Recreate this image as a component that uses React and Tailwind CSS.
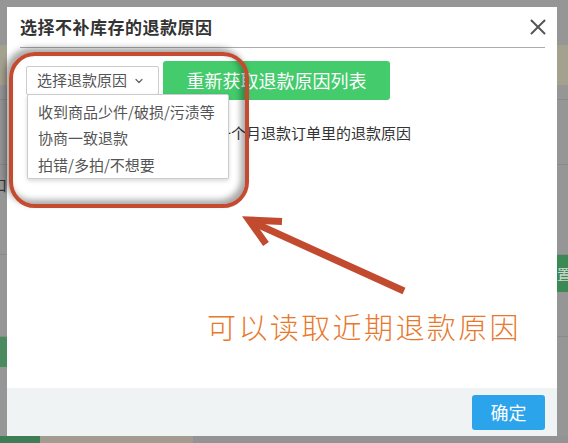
import { ChevronDown, X } from 'lucide-react'

const FONT = { fontFamily: '"Noto Sans CJK SC", "Noto Sans", sans-serif' }

function FondoPagina() {
  // lo que se ve de la página detrás del overlay gris
  return (
    <div className="flex flex-col w-[568px] h-[443px] bg-[#969696]">
      <div className="h-[45px]" />
      <div className="h-[40px] bg-[#a4a18f]" />
      <div className="h-[15px] border-b border-[#8a8a8a]" />
      <div className="h-[65px] border-b border-[#8a8a8a] flex items-end">
        <span className="text-[15px] leading-none text-[#333] -ml-[8px] mb-[-28px]">口</span>
      </div>
      <div className="h-[90px] border-b border-[#8a8a8a]" />
      <div className="h-[37px] flex justify-end">
        <div className="w-[11px] bg-[#3b8a55] text-[15px] text-[#cfd8cf] leading-[37px] overflow-hidden">置</div>
      </div>
      <div className="h-[45px] border-b border-[#8a8a8a]" />
      <div className="h-[30px] flex">
        <div className="w-[7px] bg-[#4a8c60]" />
      </div>
      <div className="h-[69px]" />
      <div className="h-[7px] flex">
        <div className="w-[40px] bg-[#3f7d57]" />
        <div className="w-[153px] bg-[#a29c90]" />
        <div className="flex-1 bg-[#939393]" />
      </div>
    </div>
  )
}

export default function App() {
  const opciones = ['收到商品少件/破损/污渍等', '协商一致退款', '拍错/多拍/不想要']
  return (
    <div className="relative w-[568px] h-[443px] overflow-hidden" style={FONT}>
      <FondoPagina />

      <div className="absolute left-[7px] top-[7px] w-[550px] h-[429px] bg-white flex flex-col">
        <div className="mx-[13px] mr-[12px] h-[41px] border-b border-[#acacac] flex items-center justify-between">
          <h1 className="text-[17px] tracking-[0.5px] font-bold text-[#333] -mt-[1px]">选择不补库存的退款原因</h1>
          <X size={26} strokeWidth={1.8} className="text-[#555] -mt-[1px] -mr-[6px]" />
        </div>

        <div className="relative flex-1 px-[19px] pt-[13px]">
          <div className="flex items-center gap-[4px]">
            <div className="w-[133px] h-[29px] border border-[#ccc] rounded-[2px] flex items-center pl-[10px] gap-[6px] text-[15px] text-[#555]">
              选择退款原因
              <ChevronDown size={12} strokeWidth={2.5} className="text-[#666]" />
            </div>
            <button className="w-[227px] h-[39px] bg-[#43cb6c] rounded-[3px] text-white text-[18px]">
              重新获取退款原因列表
            </button>
          </div>
          <p className="mt-[23px] pl-[10px] text-[15px] leading-[20px] text-[#333]">
            点击按钮可以重新读取最近一个月退款订单里的退款原因
          </p>

          <div className="absolute left-[20px] top-[46px] w-[202px] h-[85px] bg-white border border-[#ccc] rounded-[2px] shadow-[0_2px_4px_rgba(0,0,0,0.15)] flex flex-col pt-[4px]">
            {opciones.map((o) => (
              <div key={o} className="h-[27px] flex items-center pl-[10px] text-[15px] text-[#555]">
                {o}
              </div>
            ))}
          </div>
        </div>

        <div className="h-[48px] bg-[#f0f3f4] flex items-center justify-end pr-[12px]">
          <button className="w-[73px] h-[35px] bg-[#2ba4ec] rounded-[3px] text-white text-[18px]">确定</button>
        </div>
      </div>

      {/* anotaciones encima de la captura */}
      <div className="absolute left-[9px] top-[52px] w-[240px] h-[156px] rounded-[26px] border-[4px] border-[#c44a30] shadow-[-4px_-4px_6px_rgba(0,0,0,0.35),inset_-4px_-4px_6px_rgba(0,0,0,0.35)]" />
      <svg className="absolute left-0 top-0 pointer-events-none" width="568" height="443">
        <line x1="404" y1="291" x2="252" y2="222" stroke="#c24a2f" strokeWidth="7" />
        <polyline points="282,221.5 249,220 266,244" fill="none" stroke="#c24a2f" strokeWidth="7" strokeLinejoin="miter" />
      </svg>
      <div className="absolute left-[207px] top-[308px] text-[29px] leading-[36px] tracking-[2.4px] font-light text-[#e8782c]">
        可以读取近期退款原因
      </div>
    </div>
  )
}
